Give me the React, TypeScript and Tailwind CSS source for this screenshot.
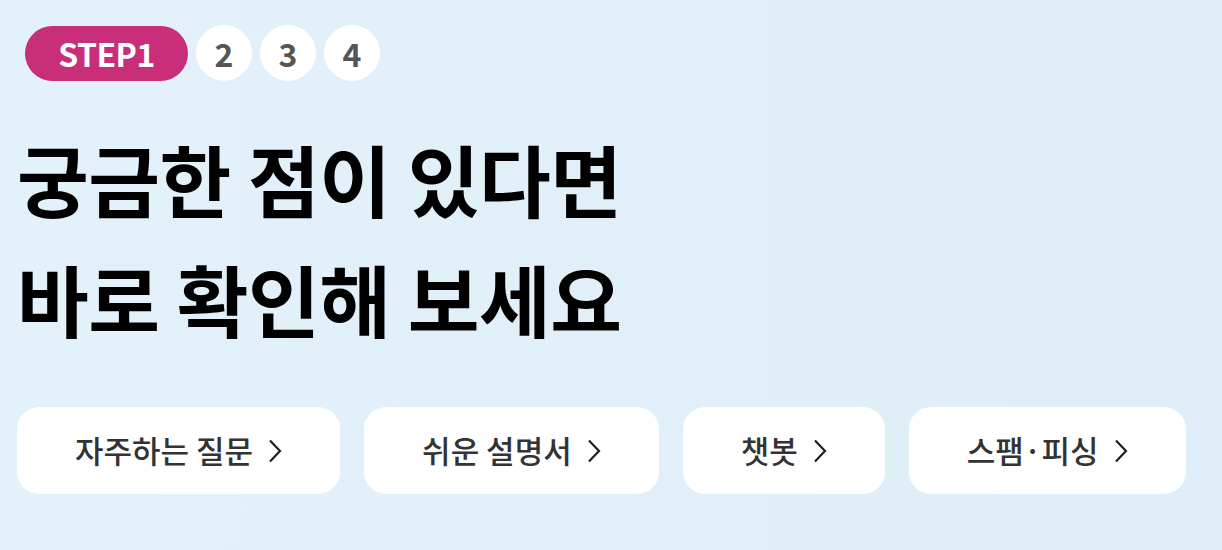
const steps = ['2', '3', '4']

const links = ['자주하는 질문', '쉬운 설명서', '챗봇', '스팸·피싱']

function Chevron() {
  return (
    <svg width="14" height="24" viewBox="0 0 14 24" fill="none" aria-hidden="true">
      <path d="M2 1.5 L12 12 L2 22.5" stroke="#1f1f1f" strokeWidth="2.2" />
    </svg>
  )
}

export default function App() {
  return (
    <div
      className="h-[550px] w-full overflow-hidden bg-gradient-to-r from-[#e3f1fa] to-[#dfedf8] px-[17px] pt-[25px]"
      style={{ fontFamily: '"Noto Sans CJK KR", "Noto Sans", sans-serif' }}
    >
      <div className="ml-2 flex items-center gap-2">
        <span className="flex h-[55px] w-[163px] items-center justify-center rounded-full bg-[#c92e7b] text-[32px] font-bold tracking-[-0.5px] text-white">
          STEP1
        </span>
        {steps.map((n) => (
          <span
            key={n}
            className="flex h-[56px] w-[56px] items-center justify-center rounded-full bg-white text-[32px] font-bold text-[#555]"
          >
            {n}
          </span>
        ))}
      </div>

      <h1 className="mt-[37px] text-[78px] font-bold leading-[120px] tracking-[-0.5px] text-black">
        궁금한 점이 있다면
        <br />
        바로 확인해 보세요
      </h1>

      <div className="mt-[49px] flex gap-6">
        {links.map((label) => (
          <a
            key={label}
            href="#"
            className="flex h-[87px] items-center gap-[15px] rounded-[22px] bg-white px-[58px] text-[31px] font-medium text-[#333]"
          >
            <span>{label}</span>
            <Chevron />
          </a>
        ))}
      </div>
    </div>
  )
}
